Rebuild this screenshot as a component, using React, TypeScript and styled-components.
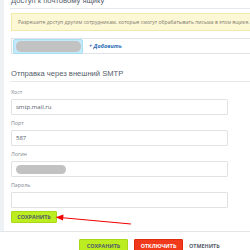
import styled, { createGlobalStyle } from "styled-components";

const Global = createGlobalStyle`
  html, body {
    margin: 0;
    padding: 0;
    overflow: hidden;
  }
  body {
    font-family: "Open Sans", "Liberation Sans", sans-serif;
  }
`

const Page = styled.div`
  position: relative;
  width: 250px;
  height: 250px;
  overflow: hidden;
  background: #eef2f4;
`

const Card = styled.div`
  margin-left: 4px;
  margin-top: -6px;
  width: 300px;
  background: #fff;
  padding: 0 0 8px 7px;
  box-sizing: border-box;
`

const Heading = styled.div<{ top?: number }>`
  margin-top: ${p => p.top || 0}px;
  height: 14px;
  line-height: 14px;
  font-family: "Liberation Sans", "Open Sans", sans-serif;
  font-size: 7.6px;
  color: #535c69;
  white-space: nowrap;
  border-bottom: 1px solid #e6e9eb;
  margin-left: -1px;
  padding-left: 1px;
`

const Notice = styled.div`
  margin-top: 4px;
  height: 18px;
  box-sizing: border-box;
  background: #fcf8d6;
  border: 1px solid #f2eaa9;
  font-size: 5.1px;
  line-height: 16px;
  color: #80776a;
  padding-left: 6px;
  white-space: nowrap;
`

const TagBox = styled.div`
  margin-top: 7px;
  height: 16px;
  box-sizing: border-box;
  border: 1px solid #dfe3e6;
  display: flex;
  align-items: center;
  padding-left: 1px;
  gap: 6px;
`

const Tag = styled.div`
  background: #c3eafa;
  border: 1px solid #a9dff5;
  border-radius: 2px;
  padding: 1px 1px 1px 2px;
  display: flex;
`

const Blob = styled.div<{ w: number; h: number }>`
  width: ${p => p.w}px;
  height: ${p => p.h}px;
  border-radius: 5px;
  background: #c2c2c2;
  filter: blur(0.6px);
`

const AddLink = styled.span`
  font-size: 5.5px;
  font-weight: 700;
  font-style: italic;
  color: #2f6fb3;
`

const Form = styled.div`
  width: 217px;
  margin-top: 6px;
  display: flex;
  flex-direction: column;
  gap: 4px;
`

const Field = styled.div`
  display: flex;
  flex-direction: column;
  gap: 3px;
`

const Label = styled.div`
  height: 8px;
  line-height: 8px;
  font-size: 5.3px;
  color: #80868e;
`

const Input = styled.div`
  height: 16px;
  box-sizing: border-box;
  border: 1px solid #dfe3e6;
  border-radius: 1px;
  padding-left: 4px;
  display: flex;
  align-items: center;
  font-size: 6px;
  color: #535c69;
`

const Button = styled.div<{ variant?: "save" | "danger" }>`
  height: ${p => p.variant ? 14 : 12}px;
  box-sizing: border-box;
  display: flex;
  align-items: center;
  justify-content: center;
  font-size: 5.4px;
  font-weight: 700;
  text-transform: uppercase;
  border-radius: 1px;
  background: ${p => p.variant === "danger" ? "#f1391b" : "#bbed21"};
  border: 1px solid ${p => p.variant === "danger" ? "#e02a0c" : "#a8d816"};
  color: ${p => p.variant === "danger" ? "#fff" : "#535c69"};
`

const FormSave = styled(Button)`
  width: 46px;
  margin-top: -1px;
`

const Footer = styled.div`
  border-top: 1px solid #e3e6e8;
  background: #fff;
  height: 30px;
  padding: 7px 0 0 79px;
  display: flex;
  gap: 6px;
  align-items: flex-start;
`

const FooterButton = styled(Button)`
  width: 49px;
`

const Cancel = styled.div`
  height: 14px;
  display: flex;
  align-items: center;
  font-size: 5.4px;
  font-weight: 700;
  color: #535c69;
  text-transform: uppercase;
`

const Overlay = styled.svg`
  position: absolute;
  left: 0;
  top: 0;
  pointer-events: none;
`

export default function App() {
  return (
    <Page>
      <Global/>
      <Card>
        <Heading>Доступ к почтовому ящику</Heading>
        <Notice>Разрешите доступ другим сотрудникам, которые смогут обрабатывать письма в этом ящике.</Notice>
        <TagBox>
          <Tag><Blob w={65} h={11}/></Tag>
          <AddLink>+ Добавить</AddLink>
        </TagBox>
        <Heading top={13}>Отправка через внешний SMTP</Heading>
        <Form>
          <Field>
            <Label>Хост</Label>
            <Input>smtp.mail.ru</Input>
          </Field>
          <Field>
            <Label>Порт</Label>
            <Input>587</Input>
          </Field>
          <Field>
            <Label>Логин</Label>
            <Input><Blob w={50} h={9}/></Input>
          </Field>
          <Field>
            <Label>Пароль</Label>
            <Input/>
          </Field>
          <FormSave>Сохранить</FormSave>
        </Form>
      </Card>
      <Footer>
        <FooterButton variant="save">Сохранить</FooterButton>
        <FooterButton variant="danger">Отключить</FooterButton>
        <Cancel>Отменить</Cancel>
      </Footer>
      <Overlay width="250" height="250">
        <line x1="131" y1="224" x2="60" y2="217.5" stroke="#f20000" strokeWidth="1.2"/>
        <polygon points="55.5,217.2 63.5,214.6 63,220.4" fill="#f20000"/>
      </Overlay>
    </Page>
  );
}
